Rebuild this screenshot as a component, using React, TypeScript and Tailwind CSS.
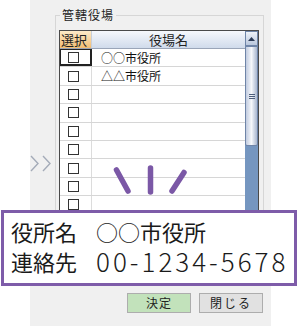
const rows = ["○○市役所", "△△市役所", "", "", "", "", "", "", "", "", "", "", ""];

function Checkbox() {
  return <div className="h-[11px] w-[11px] border border-[#333] bg-white" />;
}

function ScrollBar() {
  return (
    <div className="flex w-[14px] flex-col border-r border-[#4a4a4a] bg-[#7596c0]">
      <div className="flex h-[15px] items-center justify-center border border-[#6f85a8] bg-gradient-to-b from-[#eef2f8] to-[#b9c7dd]">
        <svg width="7" height="4" viewBox="0 0 7 4">
          <polygon points="0,4 3.5,0 7,4" fill="#2b3a55" />
        </svg>
      </div>
      <div className="flex h-[100px] items-center justify-center rounded-b-[2px] border border-[#6f85a8] bg-gradient-to-r from-[#c2cce0] via-[#f6f8fb] to-[#a9b7cf]">
        <div className="flex flex-col gap-[1px]">
          <div className="h-[1px] w-[6px] bg-[#4d5e7c]" />
          <div className="h-[1px] w-[6px] bg-[#4d5e7c]" />
          <div className="h-[1px] w-[6px] bg-[#4d5e7c]" />
        </div>
      </div>
    </div>
  );
}

export default function App() {
  return (
    <div className="relative h-[327px] w-[301px] overflow-hidden bg-white font-['Noto_Sans_CJK_JP',sans-serif] text-[#111]">
      <div className="ml-[30px] flex h-[326px] w-[241px] bg-[#f0f0f0]">
        <div className="w-[25px]">
          <svg className="mt-[155px]" width="22" height="18" viewBox="0 0 22 18" fill="none" stroke="#a4abb8" strokeWidth="1.4">
            <polyline points="1,1 8,8.5 1,16" />
            <polyline points="13,1 20,8.5 13,16" />
          </svg>
        </div>
        <div className="flex flex-col pt-[15px]">
          <div className="relative h-[271px] w-[209px] border border-[#d6d6d6]">
            <div className="absolute left-[4px] top-[-9px] bg-[#f0f0f0] px-[2px] text-[12px] leading-[16px] tracking-[1px] text-[#222]">
              管轄役場
            </div>
            <div className="ml-[3px] mt-[14px] flex h-[252px] w-[200px] overflow-hidden border-l border-t border-[#4a4a4a] bg-white">
              <div className="flex flex-1 flex-col">
                <div className="flex h-[18px] border-b border-[#9aa5b8] text-[13px] leading-[17px] text-[#222]">
                  <div className="w-[32px] border-r border-[#c9cfd9] bg-gradient-to-b from-[#fdebc9] to-[#f1bd72] pl-[1px]">選択</div>
                  <div className="flex-1 bg-gradient-to-b from-[#f6f8fc] to-[#d0dbeb] text-center">役場名</div>
                </div>
                {rows.map((name, i) => (
                  <div key={i} className="flex h-[18.4px] shrink-0 border-b border-[#d6d6d6]">
                    <div
                      className={
                        i === 0
                          ? "flex w-[32px] items-center border-b-2 border-l border-r-2 border-t border-[#222] pl-[7px]"
                          : "flex w-[32px] items-center border-r border-[#dcdcdc] pl-[8px]"
                      }
                    >
                      <Checkbox />
                    </div>
                    <div className="flex-1 pl-[9px] text-[12px] leading-[17px]">{name}</div>
                  </div>
                ))}
              </div>
              <ScrollBar />
            </div>
          </div>
          <div className="mr-[1px] mt-[7px] flex justify-end gap-[8px] text-[12px] text-[#222]">
            <div className="flex h-[20px] w-[64px] items-center justify-center border border-[#adadad] bg-[#c2e2bb] tracking-[1px]">決定</div>
            <div className="flex h-[20px] w-[64px] items-center justify-center border border-[#adadad] bg-[#e1e1e1] tracking-[2px]">閉じる</div>
          </div>
        </div>
      </div>

      <svg className="absolute left-0 top-0" width="301" height="327" fill="none" stroke="#7b58a6" strokeWidth="5.5" strokeLinecap="round">
        <line x1="116.5" y1="170" x2="128" y2="191" />
        <line x1="150.5" y1="168" x2="150.5" y2="192" />
        <line x1="184" y1="172.5" x2="172" y2="191" />
      </svg>

      <div className="absolute left-[1px] top-[210px] h-[76px] w-[296px] border-[3px] border-[#7e5ca9] bg-white pl-[7px] pt-[3px] text-[22px] leading-[30px] text-[#1a1a1a]">
        <div className="grid grid-cols-[85px_1fr]">
          <div>役所名</div>
          <div>○○市役所</div>
          <div>連絡先</div>
          <div className="text-[26px] font-light leading-[30px] tracking-[3px]">00-1234-5678</div>
        </div>
      </div>
    </div>
  );
}
